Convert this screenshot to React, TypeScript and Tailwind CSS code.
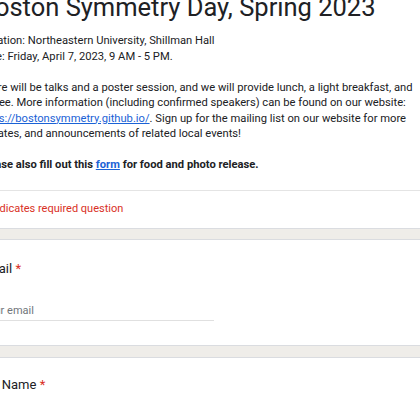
import React from "react";

export default function App() {
  const body = "font-['Roboto',sans-serif] text-[#202124]";
  return (
    <div className="w-[420px] h-[420px] overflow-hidden bg-white">
      <div className="ml-[-24px] w-[480px] mt-[-9px] bg-[#efede9] flex flex-col">
        {/* header card */}
        <div className="bg-white border-b border-[#dadce0]">
          <div className="pl-[3px] pr-6">
            <div className="font-['Roboto',sans-serif] text-[25.5px] leading-[32px] text-[#202124] whitespace-nowrap">
              Boston Symmetry Day, Spring 2023
            </div>
            <div className={`${body} text-[11.2px] leading-[15.5px] mt-[10px] whitespace-nowrap`}>
              <div>Location: Northeastern University, Shillman Hall</div>
              <div>Date: Friday, April 7, 2023, 9 AM - 5 PM.</div>
              <div className="h-[15.5px]" />
              <div>There will be talks and a poster session, and we will provide lunch, a light breakfast, and</div>
              <div>coffee. More information (including confirmed speakers) can be found on our website:</div>
              <div>
                <a className="text-[#1a62d6] underline">https://bostonsymmetry.github.io/</a>. Sign up for the mailing list on our website for more
              </div>
              <div>updates, and announcements of related local events!</div>
              <div className="h-[15.5px]" />
              <div className="font-bold">
                Please also fill out this <a className="text-[#1a62d6] underline">form</a> for food and photo release.
              </div>
            </div>
          </div>
          <div className="mt-[17px] border-t border-[#e4e4e4] h-[38px] flex items-center pl-[7px]">
            <span className="font-['Roboto',sans-serif] text-[11px] text-[#d93025] whitespace-nowrap">* Indicates required question</span>
          </div>
        </div>
        <div className="h-[10px]" />
        {/* email card */}
        <div className="bg-white border-y border-[#dadce0] h-[107px] pl-[4px] pt-[19px]">
          <div className={`${body} text-[13px] leading-[20px] whitespace-nowrap`}>
            Email <span className="text-[#d93025]">*</span>
          </div>
          <div className="mt-[20px] w-[234px] border-b border-[#e0e0e0] pl-[2px] leading-[18px]">
            <span className="font-['Roboto',sans-serif] text-[11px] text-[#70757a] whitespace-nowrap">Your email</span>
          </div>
        </div>
        <div className="h-[11px]" />
        {/* name card */}
        <div className="bg-white border-t border-[#dadce0] h-[120px] pl-[2px] pt-[17px]">
          <div className={`${body} text-[13px] leading-[20px] whitespace-nowrap`}>
            Full Name <span className="text-[#d93025]">*</span>
          </div>
        </div>
      </div>
    </div>
  );
}
